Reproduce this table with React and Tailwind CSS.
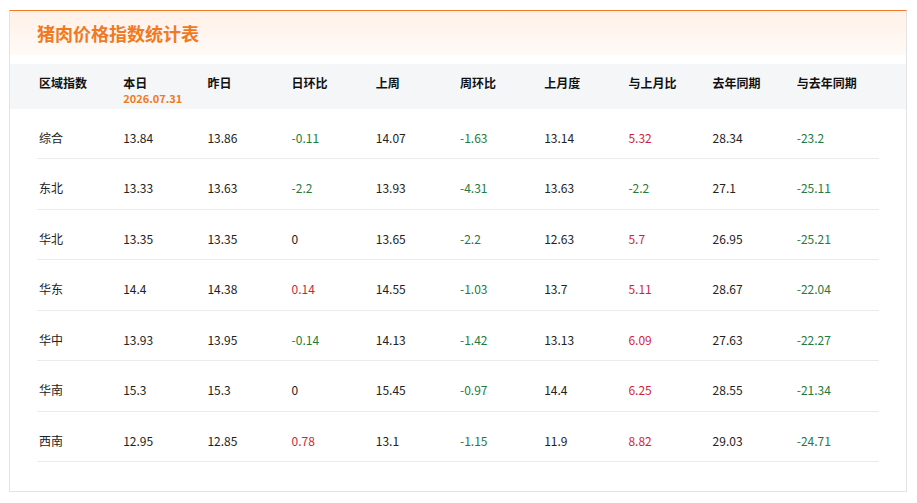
import React from 'react';

const FONT = { fontFamily: '"Noto Sans CJK SC", "Noto Sans", sans-serif' };

const columns = ['区域指数', '本日', '昨日', '日环比', '上周', '周环比', '上月度', '与上月比', '去年同期', '与去年同期'];
// columns whose value is a change, coloured by sign
const changeCols = [3, 5, 7, 9];

const rows = [
  ['综合', '13.84', '13.86', '-0.11', '14.07', '-1.63', '13.14', '5.32', '28.34', '-23.2'],
  ['东北', '13.33', '13.63', '-2.2', '13.93', '-4.31', '13.63', '-2.2', '27.1', '-25.11'],
  ['华北', '13.35', '13.35', '0', '13.65', '-2.2', '12.63', '5.7', '26.95', '-25.21'],
  ['华东', '14.4', '14.38', '0.14', '14.55', '-1.03', '13.7', '5.11', '28.67', '-22.04'],
  ['华中', '13.93', '13.95', '-0.14', '14.13', '-1.42', '13.13', '6.09', '27.63', '-22.27'],
  ['华南', '15.3', '15.3', '0', '15.45', '-0.97', '14.4', '6.25', '28.55', '-21.34'],
  ['西南', '12.95', '12.85', '0.78', '13.1', '-1.15', '11.9', '8.82', '29.03', '-24.71'],
];

function cellColor(idx, value) {
  if (!changeCols.includes(idx)) return 'text-[#222222]';
  const n = parseFloat(value);
  if (n > 0) return 'text-[#d21f3c]';
  if (n < 0) return 'text-[#237a3c]';
  return 'text-[#222222]';
}

export default function App() {
  return (
    <div className="min-h-[503px] bg-white pt-[10px] pl-[9px]" style={FONT}>
      <div className="w-[898px] h-[482px] border border-[#e3e3e3] border-t-[#f07a2a] flex flex-col">
        <div className="h-[44px] bg-linear-to-b from-[#fff1e8] to-[#fffaf7] flex items-center px-[27px]">
          <h1 className="text-[18px] font-bold text-[#f07a24] leading-none">猪肉价格指数统计表</h1>
        </div>

        <div className="mt-[9px] h-[45px] bg-[#f5f6f8]">
          <div className="ml-[27px] w-[842px] grid grid-cols-10 pt-[11px]">
            {columns.map((c, i) => (
              <div key={c} className="pl-[2px]">
                <div className="text-[12px] leading-[16px] font-bold text-[#111111]">{c}</div>
                {i === 1 && (
                  <div className="text-[11px] leading-[14px] font-bold text-[#f07a24]">2026.07.31</div>
                )}
              </div>
            ))}
          </div>
        </div>

        <div className="ml-[27px] w-[842px]">
          {rows.map((r, ri) => (
            <div
              key={r[0]}
              className={`grid grid-cols-10 items-center border-b border-[#ebebeb] pt-[9px] ${ri === 0 ? 'h-[50px]' : 'h-[50.5px]'}`}
            >
              {r.map((v, i) => (
                <div key={i} className={`pl-[2px] text-[12px] leading-[16px] ${cellColor(i, v)}`}>{v}</div>
              ))}
            </div>
          ))}
        </div>
      </div>
    </div>
  );
}
